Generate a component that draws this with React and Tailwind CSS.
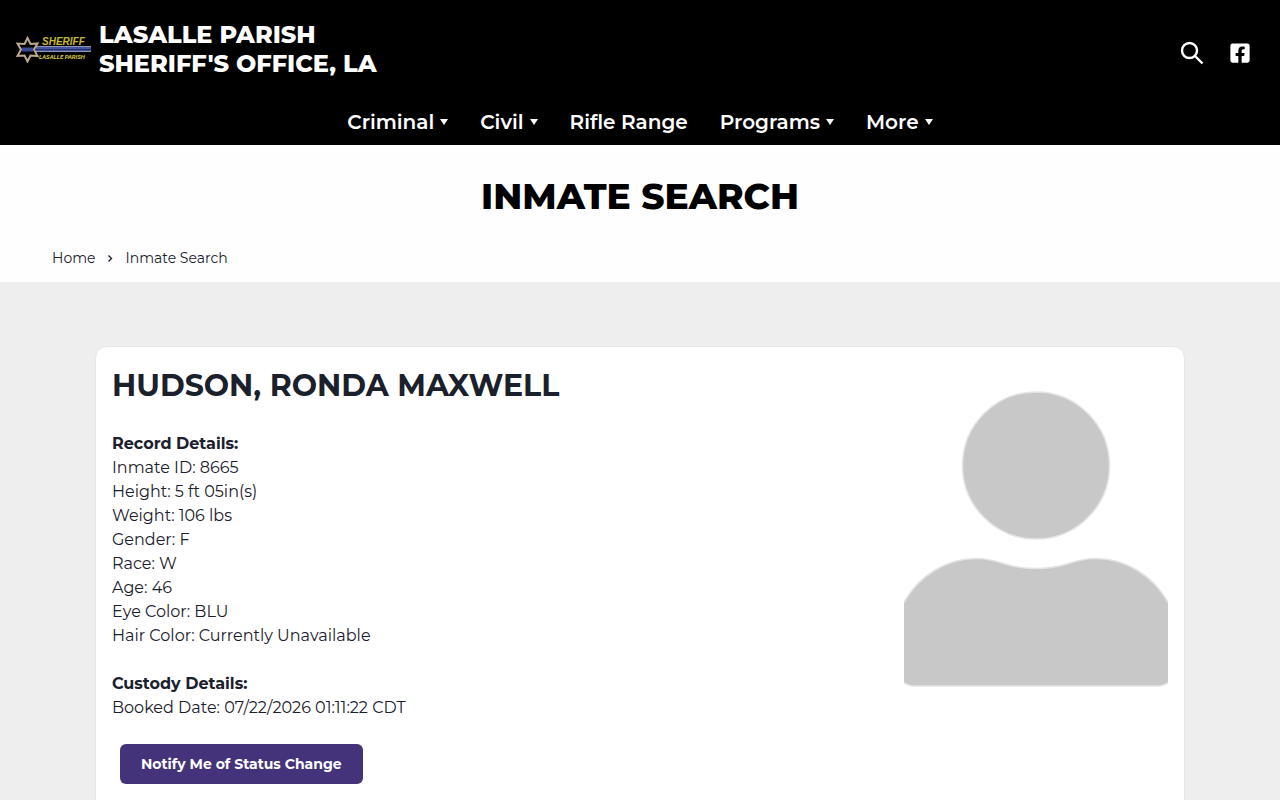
import React from 'react';
import { FaFacebookSquare } from 'react-icons/fa';

const navItems = [
    { label: 'Criminal', hasMenu: true },
    { label: 'Civil', hasMenu: true },
    { label: 'Rifle Range', hasMenu: false },
    { label: 'Programs', hasMenu: true },
    { label: 'More', hasMenu: true },
];

const inmate = {
    name: 'HUDSON, RONDA MAXWELL',
    record: [
        ['Inmate ID', '8665'],
        ['Height', '5 ft 05in(s)'],
        ['Weight', '106 lbs'],
        ['Gender', 'F'],
        ['Race', 'W'],
        ['Age', '46'],
        ['Eye Color', 'BLU'],
        ['Hair Color', 'Currently Unavailable'],
    ],
    custody: [['Booked Date', '07/22/2026 01:11:22 CDT']],
};

const Logo = () => (
    <svg viewBox="0 -1 75 28" className="w-[75px] h-7 shrink-0" role="img" aria-label="Sheriff LaSalle Parish">
        <rect x="20" y="11" width="55" height="5" fill="#46549c" />
        <rect x="20" y="10" width="55" height="1" fill="#8f94ad" />
        <rect x="20" y="13" width="55" height="1" fill="#242c72" />
        <rect x="20" y="15" width="55" height="1" fill="#8f94ad" />
        <path
            d="M11.5 2 L14.5 8 L21.5 7.5 L18 13.5 L21.5 20 L14.5 19.5 L11.5 25.5 L8.5 19.5 L1.5 20 L5 13.5 L1.5 7.5 L8.5 8 Z"
            fill="#000"
            stroke="#bda98c"
            strokeWidth="2"
        />
        <rect x="6" y="11.5" width="11" height="4" fill="#3b489a" />
        <text x="26" y="8.5" fontSize="10" fontStyle="italic" fontWeight="700" fill="#c6b936" fontFamily="Liberation Sans, sans-serif">SHERIFF</text>
        <text x="23" y="23" fontSize="6" fontStyle="italic" fontWeight="700" fill="#d6c83c" fontFamily="Roboto, sans-serif">LASALLE PARISH</text>
    </svg>
);

const Caret = () => (
    <svg viewBox="0 0 8 6" className="w-2 h-1.5" aria-hidden="true">
        <path d="M0 0h8L4 6z" fill="currentColor" />
    </svg>
);

const Silhouette = () => (
    <svg viewBox="0 -1 264 330" className="w-[264px] h-auto shrink-0 self-start" role="img" aria-label="No photo available">
        <g fill="#c8c8c8" stroke="#e4e4e4" strokeWidth="1.5">
            <circle cx="132" cy="101.5" r="73.5" />
            <path d="M-1 240 C14 212 42 194.5 72 194.5 C84 194.5 92 197 101 200 Q116 204.5 132 204.5 Q148 204.5 163 200 C172 197 180 194.5 192 194.5 C222 194.5 250 212 265 240 V318 Q260 322 254 322 H10 Q4 322 -1 318 Z" />
        </g>
    </svg>
);

const DetailList = ({ title, rows }) => (
    <section className="mb-6">
        <h3 className="font-bold">{title}</h3>
        {rows.map(([label, value]) => (
            <p key={label}>{label}: {value}</p>
        ))}
    </section>
);

const App = () => {
    return (
        <div className="min-h-screen bg-[#eeeeee] text-[#1a202c] font-[Montserrat,Inter,sans-serif]">
            {/* Header */}
            <header className="bg-black text-white">
                <div className="flex items-center justify-between pl-4 pr-7 h-[97px]">
                    <a href="#" className="flex items-center gap-2">
                        <Logo />
                        <span className="text-2xl leading-[29px] font-extrabold">
                            LASALLE PARISH<br />SHERIFF'S OFFICE, LA
                        </span>
                    </a>
                    <div className="flex items-center gap-6 pt-2">
                        <button type="button" aria-label="Search">
                            <svg viewBox="0 0 24 24" className="w-6 h-6" fill="none" stroke="currentColor" strokeWidth="2.4">
                                <circle cx="9.5" cy="9.5" r="7.5" />
                                <path d="M15 15l7.5 7.5" />
                            </svg>
                        </button>
                        <a href="#" aria-label="Facebook" className="w-6 flex justify-center">
                            <FaFacebookSquare size={22} />
                        </a>
                    </div>
                </div>
                <nav className="flex justify-center gap-8 h-12 pt-0.5 items-center text-xl leading-6 font-semibold">
                    {navItems.map((item) =>
                        item.hasMenu ? (
                            <button key={item.label} type="button" className="flex items-center gap-1.5">
                                {item.label}
                                <Caret />
                            </button>
                        ) : (
                            <a key={item.label} href="#">{item.label}</a>
                        )
                    )}
                </nav>
            </header>

            {/* Page title */}
            <div className="bg-[#fefefe] pt-7 pb-3">
                <h1 className="text-4xl leading-[46px] font-extrabold text-center text-black">INMATE SEARCH</h1>
                <nav aria-label="Breadcrumb" className="flex items-center gap-3 px-[52px] mt-[27px] text-sm leading-6">
                    <a href="#">Home</a>
                    <svg viewBox="0 0 6 8" className="w-1.5 h-2" fill="none" stroke="currentColor" strokeWidth="1.4" aria-hidden="true">
                        <path d="M1.5 1.5l3 3-3 3" />
                    </svg>
                    <span>Inmate Search</span>
                </nav>
            </div>

            {/* Inmate record */}
            <main className="px-[95px] pt-16">
                <div className="flex justify-between gap-4 bg-white border border-gray-200 rounded-t-xl px-4 pt-4 pb-8">
                    <div>
                        <h2 className="text-3xl leading-[45px] font-bold mb-6">{inmate.name}</h2>
                        <DetailList title="Record Details:" rows={inmate.record} />
                        <DetailList title="Custody Details:" rows={inmate.custody} />
                        <button
                            type="button"
                            className="mx-2 h-10 px-[21px] rounded-md bg-[#44337a] text-white text-sm font-bold"
                        >
                            Notify Me of Status Change
                        </button>
                    </div>
                    <Silhouette />
                </div>
            </main>
        </div>
    );
};

export default App;
